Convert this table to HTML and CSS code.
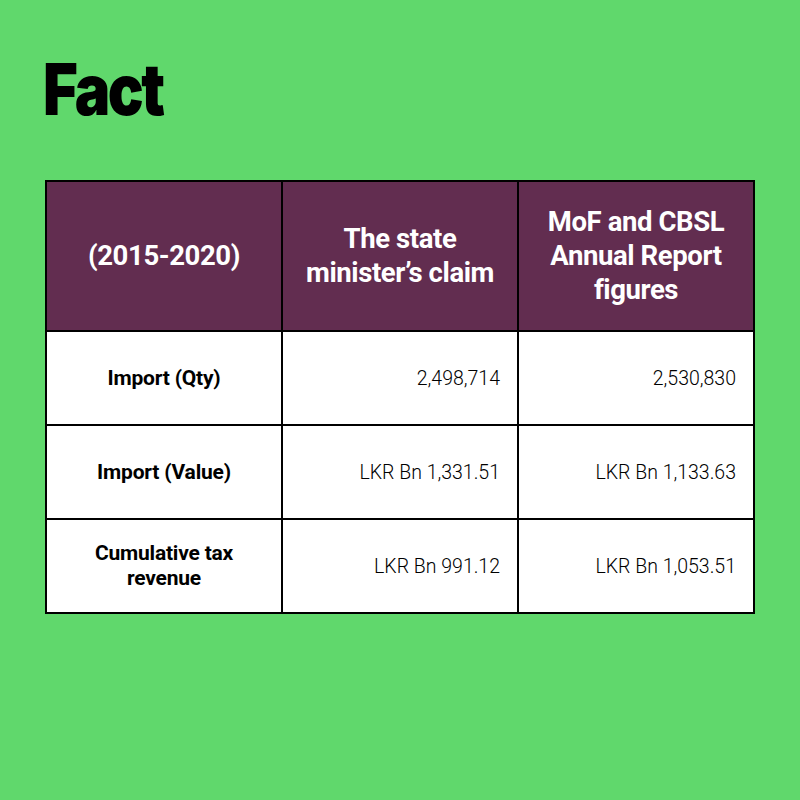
FILE: index.html
```html
<!DOCTYPE html>
<html>
<head>
<meta charset="utf-8">
<link rel="stylesheet" href="styles.css">
</head>
<body>
<div class="page">
  <h1 class="title">Fact</h1>
  <table class="facts">
    <thead>
      <tr>
        <th>(2015-2020)</th>
        <th>The state<br>minister’s claim</th>
        <th>MoF and CBSL<br>Annual Report<br>figures</th>
      </tr>
    </thead>
    <tbody>
      <tr>
        <td class="label">Import (Qty)</td>
        <td class="value">2,498,714</td>
        <td class="value">2,530,830</td>
      </tr>
      <tr>
        <td class="label">Import (Value)</td>
        <td class="value">LKR Bn 1,331.51</td>
        <td class="value">LKR Bn 1,133.63</td>
      </tr>
      <tr>
        <td class="label">Cumulative tax<br>revenue</td>
        <td class="value">LKR Bn 991.12</td>
        <td class="value">LKR Bn 1,053.51</td>
      </tr>
    </tbody>
  </table>
</div>
</body>
</html>
```

FILE: styles.css
```css
html, body {
  margin: 0;
  padding: 0;
  background: #60d86c;
}
.page {
  width: 800px;
  height: 800px;
  box-sizing: border-box;
  padding: 54px 45px 0 45px;
  font-family: Roboto, "Noto Sans", sans-serif;
}
.title {
  margin: 0;
  margin-left: -2px;
  font-family: Inter, Roboto, sans-serif;
  font-weight: 900;
  font-size: 71px;
  line-height: 70px;
  letter-spacing: -3px;
  color: #000;
  transform-origin: left center;
  transform: scaleX(0.84);
}
.facts {
  margin-top: 56px;
  width: 710px;
  border-collapse: collapse;
  table-layout: fixed;
}
.facts th, .facts td {
  border: 2px solid #000;
}
.facts th {
  background: #622d50;
  color: #fff;
  font-weight: 700;
  font-size: 27.5px;
  line-height: 34px;
  height: 148px;
  padding: 0 6px;
  text-align: center;
  letter-spacing: -0.4px;
}
.facts td {
  background: #fff;
  height: 90px;
  font-size: 19.5px;
  line-height: 25px;
  color: #000;
}
.facts td.label {
  text-align: center;
  font-weight: 700;
  font-size: 21px;
  letter-spacing: -0.2px;
}
.facts td.value {
  text-align: right;
  padding-right: 17px;
  font-weight: 300;
}
```
